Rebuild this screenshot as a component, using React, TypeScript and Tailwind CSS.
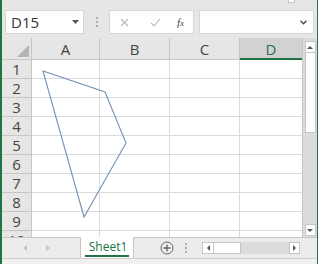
import React from "react";

const rows = [1, 2, 3, 4, 5, 6, 7, 8, 9, 10];

export default function App() {
  const font = { fontFamily: '"Open Sans", "Liberation Sans", sans-serif' };
  return (
    <div className="w-[318px] h-[264px] overflow-hidden flex flex-col bg-[#e6e6e6] border-l-2 border-r border-[#217346]" style={font}>
      {/* top band */}
      <div className="h-[10px] flex justify-end pr-[22px]">
        <div className="w-[7px] h-[3px] bg-white border border-[#c8c8c8] border-t-0" />
      </div>
      {/* formula bar */}
      <div className="h-[24px] flex items-stretch">
        <div className="ml-[3px] w-[79px] bg-white border border-[#d6d6d6] flex items-center pl-[5px] pr-[4px]">
          <span className="text-[15px] text-[#333] flex-1 leading-none">D15</span>
          <svg width="7" height="4" viewBox="0 0 7 4"><path d="M0 0h7L3.5 4z" fill="#555" /></svg>
        </div>
        <div className="w-[25px] flex flex-col items-center justify-center gap-[2px]">
          <div className="w-[2px] h-[2px] bg-[#b0b0b0]" />
          <div className="w-[2px] h-[2px] bg-[#b0b0b0]" />
          <div className="w-[2px] h-[2px] bg-[#b0b0b0]" />
        </div>
        <div className="w-[85px] bg-white border border-[#d6d6d6] flex items-center">
          <svg className="ml-[10px]" width="9" height="9" viewBox="0 0 9 9"><path d="M1 1l7 7M8 1L1 8" stroke="#b8b8b8" strokeWidth="1.1" /></svg>
          <svg className="ml-[21px]" width="11" height="9" viewBox="0 0 11 9"><path d="M1 5l3 3 6-7" stroke="#b8b8b8" strokeWidth="1.1" fill="none" /></svg>
          <span className="ml-[16px] text-[11px] italic text-[#444]" style={{ fontFamily: '"Liberation Serif", serif' }}>f<span className="text-[9px]">x</span></span>
        </div>
        <div className="ml-[5px] w-[115px] bg-white border border-[#d6d6d6] flex items-center justify-end pr-[6px]">
          <svg width="7" height="5" viewBox="0 0 7 5"><path d="M0.5 0.8l3 3 3-3" stroke="#444" strokeWidth="1.3" fill="none" /></svg>
        </div>
      </div>
      <div className="h-[4px]" />
      {/* main area */}
      <div className="h-[199px] flex bg-white">
        <div className="relative w-[300px] h-[199px] overflow-hidden">
          <div className="grid grid-cols-[30px_68px_70px_70px_62px] grid-rows-[22px_repeat(10,19px)]">
            <div className="bg-[#e6e6e6] border-r border-b border-[#c6c6c6] flex items-end justify-end pr-[2px] pb-[2px]">
              <svg width="12" height="12" viewBox="0 0 12 12"><path d="M12 0v12H0z" fill="#b4b4b4" /></svg>
            </div>
            {["A", "B", "C"].map((c) => (
              <div key={c} className="bg-[#e6e6e6] border-r border-b border-[#c6c6c6] flex items-center justify-center text-[15px] text-[#444] leading-none pt-[2px]">{c}</div>
            ))}
            <div className="bg-[#d2d2d2] border-b-2 border-[#217346] flex items-center justify-center text-[15px] text-[#2d6e4a] leading-none pt-[3px]">D</div>
            {rows.map((r) => (
              <React.Fragment key={r}>
                <div className="bg-[#e6e6e6] border-r border-b border-[#c6c6c6] flex items-center justify-center text-[15px] text-[#444] leading-none">{r}</div>
                <div className="border-r border-b border-[#dadada]" />
                <div className="border-r border-b border-[#dadada]" />
                <div className="border-r border-b border-[#dadada]" />
                <div className="border-b border-[#dadada]" />
              </React.Fragment>
            ))}
          </div>
          <svg className="absolute left-0 top-0" width="300" height="199" viewBox="0 0 300 199">
            <path d="M41 33L103 54L124 105L82 179Z" fill="none" stroke="#7391b8" strokeWidth="1.1" />
          </svg>
        </div>
        {/* vertical scrollbar */}
        <div className="w-[15px] bg-[#dcdcdc] border-l border-[#c6c6c6] flex flex-col items-center pt-[3px] pb-[1px]">
          <div className="w-[11px] h-[12px] bg-white border border-[#c6c6c6] flex items-center justify-center">
            <svg width="6" height="3" viewBox="0 0 6 3"><path d="M0 3h6L3 0z" fill="#555" /></svg>
          </div>
          <div className="w-[11px] h-[80px] bg-white border border-[#c6c6c6] border-t-0" />
          <div className="flex-1" />
          <div className="w-[11px] h-[12px] bg-white border border-[#c6c6c6] flex items-center justify-center">
            <svg width="6" height="3" viewBox="0 0 6 3"><path d="M0 0h6L3 3z" fill="#555" /></svg>
          </div>
        </div>
      </div>
      {/* tab bar */}
      <div className="h-[21px] flex bg-[#ececec] border-t border-[#c6c6c6]">
        <div className="w-[78px] flex items-center">
          <svg className="ml-[21px]" width="4" height="6" viewBox="0 0 4 6"><path d="M4 0v6L0 3z" fill="#c6c6c6" /></svg>
          <svg className="ml-[19px]" width="4" height="6" viewBox="0 0 4 6"><path d="M0 0v6l4-3z" fill="#c6c6c6" /></svg>
        </div>
        <div className="w-[54px] -mt-px bg-white border-x border-[#c6c6c6] flex flex-col items-center">
          <span className="text-[12px] text-[#217346] leading-none mt-[4px] pl-[2px]">Sheet1</span>
          <div className="mt-auto w-[44px] h-[2px] bg-[#217346] mb-[1px]" />
        </div>
        <div className="w-[26px]" />
        <div className="flex items-center">
          <svg width="14" height="14" viewBox="0 0 14 14"><circle cx="7" cy="7" r="6" fill="none" stroke="#666" strokeWidth="1" /><path d="M7 3.5v7M3.5 7h7" stroke="#666" strokeWidth="1.3" /></svg>
        </div>
        <div className="ml-[11px] flex flex-col justify-center gap-[2px]">
          <div className="w-[2px] h-[2px] bg-[#b0b0b0]" />
          <div className="w-[2px] h-[2px] bg-[#b0b0b0]" />
          <div className="w-[2px] h-[2px] bg-[#b0b0b0]" />
        </div>
        <div className="ml-[15px] mt-[4px] h-[12px] w-[98px] bg-[#dcdcdc] flex">
          <div className="w-[12px] h-[12px] bg-white border border-[#c6c6c6] flex items-center justify-center">
            <svg width="3" height="6" viewBox="0 0 3 6"><path d="M3 0v6L0 3z" fill="#555" /></svg>
          </div>
          <div className="w-[27px] h-[12px] bg-white border border-[#c6c6c6] border-l-0" />
          <div className="flex-1" />
          <div className="w-[11px] h-[12px] bg-white border border-[#c6c6c6] flex items-center justify-center">
            <svg width="3" height="6" viewBox="0 0 3 6"><path d="M0 0v6l3-3z" fill="#555" /></svg>
          </div>
        </div>
      </div>
      {/* status strip */}
      <div className="flex-1 bg-[#f0f0f0] border-t border-[#d0d0d0]" />
    </div>
  );
}
